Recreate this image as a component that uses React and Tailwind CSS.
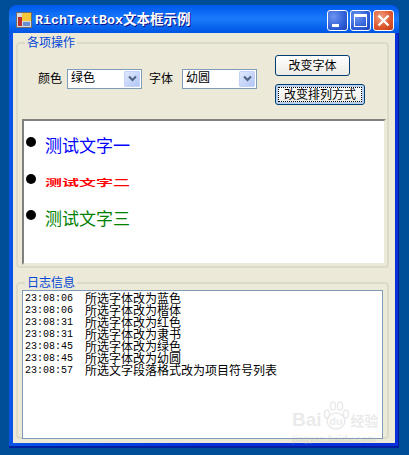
const CJK = "font-['Liberation_Sans','Noto_Sans_CJK_SC',sans-serif]";

const logs = [
  ["23:08:06", "所选字体改为蓝色"],
  ["23:08:06", "所选字体改为楷体"],
  ["23:08:31", "所选字体改为红色"],
  ["23:08:31", "所选字体改为隶书"],
  ["23:08:45", "所选字体改为绿色"],
  ["23:08:45", "所选字体改为幼圆"],
  ["23:08:57", "所选文字段落格式改为项目符号列表"],
];

function Combo({ value, className }) {
  return (
    <div className={`flex items-center justify-between h-[20px] w-[75px] border border-[#7f9db9] bg-white pl-[3px] pr-[1px] text-[12px] text-black ${className}`}>
      <span className="leading-[12px] -mt-[1px]">{value}</span>
      <div className="flex items-center justify-center w-[16px] h-[16px] rounded-[1px] bg-gradient-to-br from-[#dfe8fd] to-[#b3c6f5] border border-[#c3d2f8]">
        <svg width="9" height="7" viewBox="0 0 9 7">
          <path d="M1 1.5 L4.5 5 L8 1.5" fill="none" stroke="#4d6185" strokeWidth="2" />
        </svg>
      </div>
    </div>
  );
}

function XpButton({ children, focused, className }) {
  return (
    <button className={`relative flex items-center justify-center rounded-[3px] border border-[#003c74] bg-gradient-to-b from-white to-[#ecebe5] text-[12px] text-black ${focused ? "shadow-[inset_0_0_0_2px_#b9d0f0]" : ""} ${className}`}>
      {focused && <span className="absolute inset-[2px] border border-dotted border-black" />}
      <span className="relative">{children}</span>
    </button>
  );
}

function CaptionButton({ children, red }) {
  return (
    <div className={`flex items-center justify-center w-[21px] h-[21px] rounded-[3px] border border-white ${red ? "bg-[radial-gradient(circle_at_35%_30%,#f0a080,#de5a32_55%,#c23a12)]" : "bg-[radial-gradient(circle_at_30%_30%,#6d94ef,#2f5fd8_60%,#1e44b8)]"}`}>
      {children}
    </div>
  );
}

function Row({ color, children, squat }) {
  return (
    <div className="flex items-start h-[36.5px]">
      <div className="w-[10px] h-[10px] rounded-full bg-black shrink-0" />
      <span className={`ml-[9px] text-[17px] leading-[20px] ${color} ${squat ? "font-bold scale-y-[0.55] origin-center -mt-[1px]" : ""}`}>{children}</span>
    </div>
  );
}

export default function App() {
  return (
    <div className={`w-[409px] h-[455px] overflow-hidden bg-[#004e98] pt-[5px] pl-[9px] ${CJK}`}>
      <div className="flex flex-col w-[390px] h-[443px] rounded-t-[8px] bg-gradient-to-r from-[#0a55e8] via-[#0831d9] to-[#0831d9] shadow-[inset_0_-2px_0_#001ea0,inset_-1px_0_0_#001ea0]">
        {/* title bar */}
        <div className="flex items-center justify-between h-[28px] pl-[7px] pr-[5px] pt-[2px] rounded-t-[8px] bg-gradient-to-b from-[#0058ee] via-[#1a7afa] to-[#0054e3]">
          <div className="flex items-center">
            <svg width="16" height="16" viewBox="0 0 16 16" className="mr-[3px]">
              <rect x="0.5" y="0.5" width="15" height="15" fill="#d8d8e0" stroke="#706a60" />
              <rect x="2" y="5" width="4" height="9" fill="#b83030" />
              <rect x="6" y="1" width="9" height="8" fill="#f4c838" />
              <rect x="7" y="10" width="7" height="4" fill="#6a90d0" />
            </svg>
            <span className="text-[13.5px] leading-[18px] font-bold text-white whitespace-nowrap [text-shadow:1px_1px_0_#0f1089]">
              <span className="font-['Liberation_Mono'] text-[13.33px]">RichTextBox</span>文本框示例
            </span>
          </div>
          <div className="flex gap-[2px]">
            <CaptionButton>
              <div className="w-[7px] h-[3px] bg-white mt-[10px] -ml-[4px]" />
            </CaptionButton>
            <CaptionButton>
              <div className="w-[13px] h-[13px] border border-t-[3px] border-white" />
            </CaptionButton>
            <CaptionButton red>
              <svg width="13" height="13" viewBox="0 0 13 13">
                <path d="M1.5 1.5 L11.5 11.5 M11.5 1.5 L1.5 11.5" stroke="#fff" strokeWidth="2.4" />
              </svg>
            </CaptionButton>
          </div>
        </div>

        {/* client area */}
        <div className="flex flex-col h-[410px] mx-[4px] bg-[#ece9d8] px-[3px] pt-[3px] text-black">
          <fieldset className="h-[232px] w-[373px] border-2 border-[#dcdacb] rounded-[4px] pl-[4px]">
            <legend className="ml-[3px] px-[2px] text-[12px] leading-[14px] text-[#0046d5]">各项操作</legend>
            <div className="flex h-[69px]">
              <div className="flex items-center pt-[15px] h-[42px] text-[12px]">
                <span className="ml-[16px]">颜色</span>
                <Combo value="绿色" className="ml-[5px]" />
                <span className="ml-[7px]">字体</span>
                <Combo value="幼圆" className="ml-[9px]" />
              </div>
              <div className="flex flex-col items-start ml-[18px] pt-[5px] gap-[8px]">
                <XpButton className="w-[75px] h-[21px]">改变字体</XpButton>
                <XpButton focused className="w-[90px] h-[21px]">改变排列方式</XpButton>
              </div>
            </div>
            <div className="w-[364px] h-[146px] border-2 border-[#808080] border-r-[#ece9d8] border-b-[#ece9d8] bg-white pt-[16px] pl-[2px]">
              <Row color="text-[#0000ff]">测试文字一</Row>
              <Row color="text-[#ff0000]" squat>测试文字二</Row>
              <Row color="text-[#008000]">测试文字三</Row>
            </div>
          </fieldset>

          <fieldset className="h-[163px] w-[373px] mt-[8px] border-2 border-[#dcdacb] rounded-[4px] pl-[4px]">
            <legend className="ml-[3px] px-[2px] text-[12px] leading-[14px] text-[#0046d5]">日志信息</legend>
            <div className="w-[361px] h-[149px] border border-[#7f9db9] bg-white pt-[2px] pl-[2px] overflow-hidden">
              {logs.map(([time, msg], i) => (
                <div key={i} className="flex h-[12px] text-[12px] leading-[12px]">
                  <span className="w-[60px] font-['Liberation_Mono'] text-[10px]">{time}</span>
                  <span className="whitespace-nowrap">{msg}</span>
                </div>
              ))}
            </div>
          </fieldset>
        </div>
      </div>

      {/* watermark */}
      <div className="absolute left-[292px] top-[401px] w-[92px] h-[44px] opacity-25 text-[#b0b0b0]">
        <div className="flex items-end h-[30px] font-bold">
          <span className="text-[19px] leading-[22px]">Bai</span>
          <svg width="27" height="30" viewBox="0 0 27 30">
            <g fill="none" stroke="currentColor" strokeWidth="1.5">
              <ellipse cx="5" cy="13" rx="2.5" ry="4" />
              <ellipse cx="11" cy="5" rx="2.5" ry="4" />
              <ellipse cx="18" cy="5" rx="2.5" ry="4" />
              <ellipse cx="24" cy="13" rx="2.5" ry="4" />
              <ellipse cx="14" cy="20" rx="9" ry="8" />
            </g>
            <text x="14" y="24" textAnchor="middle" fontSize="11" fill="currentColor" stroke="none">du</text>
          </svg>
          <span className="text-[14px] leading-[20px] ml-[2px] whitespace-nowrap">经验</span>
        </div>
        <div className="mt-[2px] text-[9.5px] leading-[11px] font-bold whitespace-nowrap">jingyan.baidu.com</div>
      </div>
    </div>
  );
}
